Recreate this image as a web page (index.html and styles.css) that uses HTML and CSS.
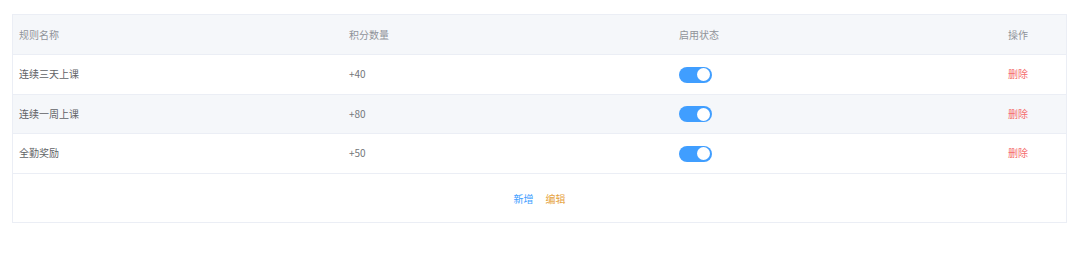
FILE: index.html
```html
<!DOCTYPE html>
<html lang="zh">
<head>
<meta charset="utf-8">
<title>积分规则</title>
<link rel="stylesheet" href="styles.css">
</head>
<body>
<div class="table">
  <div class="row head">
    <div class="cell">规则名称</div>
    <div class="cell">积分数量</div>
    <div class="cell">启用状态</div>
    <div class="cell">操作</div>
  </div>
  <div class="row">
    <div class="cell">连续三天上课</div>
    <div class="cell num">+40</div>
    <div class="cell"><span class="switch"><span class="knob"></span></span></div>
    <div class="cell"><span class="del">删除</span></div>
  </div>
  <div class="row striped">
    <div class="cell">连续一周上课</div>
    <div class="cell num">+80</div>
    <div class="cell"><span class="switch"><span class="knob"></span></span></div>
    <div class="cell"><span class="del">删除</span></div>
  </div>
  <div class="row">
    <div class="cell">全勤奖励</div>
    <div class="cell num">+50</div>
    <div class="cell"><span class="switch"><span class="knob"></span></span></div>
    <div class="cell"><span class="del">删除</span></div>
  </div>
  <div class="footer">
    <span class="add">新增</span>
    <span class="edit">编辑</span>
  </div>
</div>
</body>
</html>
```
FILE: styles.css
```css
* { box-sizing: border-box; }
body {
  margin: 0;
  padding: 14px 13px 0 12px;
  background: #fff;
  font-family: "Noto Sans CJK SC", "Noto Sans", sans-serif;
  font-size: 10px;
  color: #606266;
}
.table {
  width: 1055px;
  border: 1px solid #ebeef5;
}
.row {
  display: grid;
  grid-template-columns: 330px 330px 329px 1fr;
  height: 39.5px;
  align-items: center;
  border-bottom: 1px solid #ebeef5;
}
.row.head {
  height: 40px;
  background: #f5f7fa;
  color: #909399;
}
.row.striped { background: #f5f7fa; }
.cell {
  padding-left: 6px;
  line-height: 14px;
}
.num { color: #73767a; }
.switch {
  display: flex;
  justify-content: flex-end;
  align-items: center;
  width: 33px;
  height: 16px;
  border-radius: 8px;
  background: #409eff;
  padding: 0 2px;
  margin-top: 1px;
}
.knob {
  width: 13px;
  height: 13px;
  border-radius: 50%;
  background: #fff;
}
.del { color: #f56c6c; }
.footer {
  height: 48px;
  display: flex;
  justify-content: center;
  align-items: center;
  gap: 12px;
  padding-top: 2px;
}
.add { color: #409eff; }
.edit { color: #e6a23c; }
```
